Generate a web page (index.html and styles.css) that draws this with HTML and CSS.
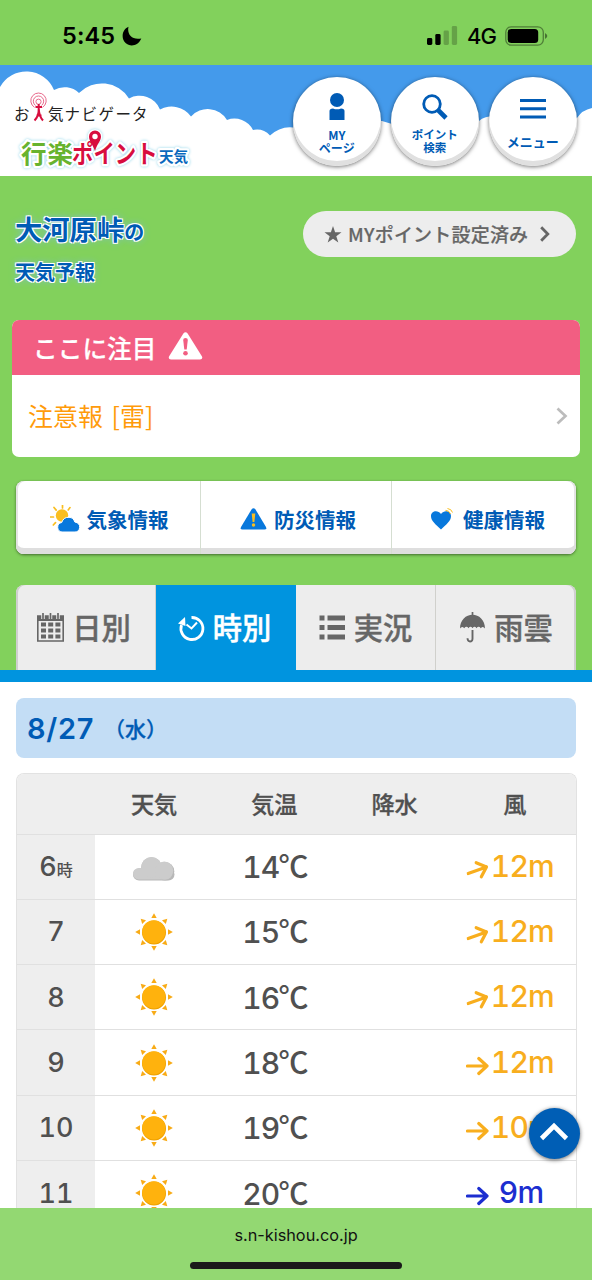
FILE: index.html
```html
<!DOCTYPE html>
<html lang="ja">
<head>
<meta charset="utf-8">
<title>大河原峠の天気予報</title>
<link rel="stylesheet" href="styles.css">
</head>
<body>
<svg width="0" height="0" class="defs">
  <symbol id="sun" viewBox="0 0 40 40"><circle cx="20" cy="20.4" r="12" fill="#eda000"/><circle cx="19.8" cy="19.8" r="11.6" fill="#ffb20d"/><g fill="#f8ab16"><path id="ray" d="M20 1.2l2.7 4.8h-5.4z"/><use href="#ray" transform="rotate(45 20 20)"/><use href="#ray" transform="rotate(90 20 20)"/><use href="#ray" transform="rotate(135 20 20)"/><use href="#ray" transform="rotate(180 20 20)"/><use href="#ray" transform="rotate(225 20 20)"/><use href="#ray" transform="rotate(270 20 20)"/><use href="#ray" transform="rotate(315 20 20)"/></g></symbol>
  <symbol id="arrow" viewBox="0 0 24 24"><path d="M1.500 12H21M12.800 4.500L21 12l-8.200 7.500" fill="none" stroke="currentColor" stroke-width="3.200" stroke-linecap="round" stroke-linejoin="round"/></symbol>
</svg>
<div class="screen">
  <div class="statusbar">
    <div class="clock">5:45
      <svg width="20" height="20" viewBox="0 0 20 20"><path d="M6.500 .8C4.800 7.800 9.500 14.500 19.300 12.500C16.500 19.500 8.500 21.500 3.600 17C-1.500 12 .3 3.500 6.500.8z"/></svg>
    </div>
    <div class="signals">
      <svg width="31" height="20" viewBox="0 0 31 20"><rect x="0" y="12" width="5.300" height="7" rx="1.400"/><rect x="8.300" y="8" width="5.300" height="11" rx="1.400"/><g opacity=".22"><rect x="16.600" y="4.500" width="5.300" height="14.500" rx="1.400"/><rect x="24.800" y="0" width="5.300" height="19" rx="1.400"/></g></svg>
      <span>4G</span>
      <svg width="43" height="20" viewBox="0 0 43 20"><rect x=".8" y=".8" width="37.500" height="18.400" rx="5.500" fill="none" stroke="#000" stroke-opacity=".4" stroke-width="1.300"/><rect x="2.700" y="2.900" width="30.500" height="14.200" rx="3.500"/><path d="M40 7q4.600 3 0 6z" opacity=".45"/></svg>
    </div>
  </div>

  <header class="header">
    <svg class="sky" width="592" height="111" viewBox="0 65 592 111">
      <path fill="#fff" d="M0 87A30 30 0 0 1 54 90A21 21 0 0 1 79 93A32 32 0 0 1 129 98.500A22 22 0 0 1 160 109.500A24 24 0 0 1 191 116.500A22.500 22.500 0 0 1 227 120A21 21 0 0 1 253 130A18 18 0 0 1 270 135.500A28 28 0 0 1 310 136Q345 120 382 121L392 124Q430 105 479 121Q484 116 496 116L540 120L577 118Q582 110 592 108V176H0Z"/>
    </svg>
    <div class="header-row">
      <svg class="logo" width="200" height="111" viewBox="0 65 200 111">
        <g fill="none" stroke="#e8698c" stroke-width="1"><path d="M34.500 107.300A7.700 7.700 0 1 1 42.500 107.300"/><path d="M35.600 105.500A5.200 5.200 0 1 1 41.400 105.500"/><circle cx="38.500" cy="101.700" r="2.600"/></g>
        <path d="M38.700 104V110M35.500 107h6.500M38.700 108.500Q39 116 34.500 120.500M38.800 109Q39 116 43 120.500M36.500 115.500h5" fill="none" stroke="#d80d3e" stroke-width="2"/>
        <g class="logo-small"><text x="14" y="120.300">お</text><text x="48" y="120.300">気</text><text x="64.500" y="120.300">ナ</text><text x="81.500" y="120.300">ビ</text><text x="98.500" y="120.300">ゲ</text><text x="115.500" y="120.300">ー</text><text x="132" y="120.300">タ</text></g>
        <g class="logo-big">
          <g class="halo"><text transform="translate(21 162.500) scale(1 1)" textLength="52">行楽</text><text transform="translate(72 162.500) scale(.84 1)">ポイント</text><text class="tiny" x="159" y="162" textLength="29">天気</text><circle cx="95" cy="136.500" r="5"/></g>
          <text transform="translate(21 162.500)" textLength="52" fill="#67b32e">行楽</text><text class="kana" transform="translate(72 162.500) scale(.84 1)" fill="#d80d3e">ポイント</text><text class="tiny" x="159" y="162" textLength="29" fill="#0868bd">天気</text>
        </g>
        <path d="M95 151C92 143 89 141 89 136.500a6 6 0 0 1 12 0C101 141 97.500 143 95 151z" fill="#d80d3e"/><circle cx="95" cy="136.500" r="2.700" fill="#fff"/>
      </svg>
      <nav class="rounds">
        <a class="round"><svg width="18" height="28" viewBox="0 0 18 28"><circle cx="9" cy="7" r="7"/><path d="M1.500 27V18Q1.500 15.500 5 15.500Q9 17.200 13 15.500Q16.500 15.500 16.500 18V27z"/></svg><span class="round-label">MY<br>ページ</span></a>
        <a class="round"><svg width="26" height="26" viewBox="0 0 26 26"><circle cx="10" cy="10" r="8.300" fill="none" stroke="#005bb5" stroke-width="2.800"/><path d="M16 16l8 8" stroke="#005bb5" stroke-width="4.600"/></svg><span class="round-label search">ポイント<br>検索</span></a>
        <a class="round menu"><svg width="26" height="20" viewBox="0 0 26 20"><path d="M0 1.500h26M0 9.800h26M0 18h26" stroke="#005bb5" stroke-width="2.900"/></svg><span class="round-label">メニュー</span></a>
      </nav>
    </div>
  </header>

  <section class="hero">
    <div class="titlebar">
      <h1><span>大河原峠</span><small>の</small><em>天気予報</em></h1>
      <a class="pill"><svg width="18" height="17" viewBox="0 0 17 17"><path d="M8.500 0l2.100 6.200H17l-5.200 4 2 6.400-5.300-3.900-5.300 3.900 2-6.400L0 6.200h6.400z"/></svg><span>MYポイント設定済み</span><svg width="10" height="16" viewBox="0 0 10 16"><path d="M1.200 1.200L7.800 8l-6.600 6.700" fill="none" stroke="#666" stroke-width="2.800"/></svg></a>
    </div>

    <div class="alert">
      <h2>ここに注目<svg width="35" height="28" viewBox="0 0 35 28"><path d="M15.400 1.500Q17.500-1 19.600 1.500L34 24.500Q35 27.500 32 27.500H3Q0 27.500 1 24.500z" fill="#fff"/><path d="M15.200 8q0-2 2.300-2t2.300 2l-1.100 9.500h-2.400z" fill="#f25e82"/><circle cx="17.500" cy="21.300" r="2.300" fill="#f25e82"/></svg></h2>
      <a class="alert-body"><span>注意報 [雷]</span><svg width="12" height="18" viewBox="0 0 12 18"><path d="M1.500 1.500L9.500 9l-8 7.500" fill="none" stroke="#bcbcbc" stroke-width="2.700"/></svg></a>
    </div>

    <div class="infos">
      <a><svg width="30" height="28" viewBox="0 0 30 28"><circle cx="12" cy="10.500" r="6.200" fill="#f9be20"/><path d="M12.500 0v3M4 2.500l2.200 2.600M20 2.600l-1.800 2.300M0 12h3.500M3.300 20l2.200-2.300" stroke="#f9be20" stroke-width="1.700" stroke-linecap="round"/><path d="M12 27a4.800 4.800 0 0 1-.3-9.500Q13.500 12 19 12.300Q23.500 12.500 24.800 17Q30 18 29.700 22.500Q29 27 25 27z" fill="#0878dc" stroke="#fff"/></svg><span>気象情報</span></a>
      <a><svg width="27" height="22" viewBox="0 0 27 22"><path d="M11.500 1.500q2-2.400 4 0L26 19q1 2.500-1.500 2.500H2.500Q0 21.500 1 19z" fill="#0878dc"/><path d="M11.700 5.500h3.600l-.9 8.500h-1.800z" fill="#f9be20"/><circle cx="13.500" cy="17" r="1.700" fill="#f9be20"/></svg><span>防災情報</span></a>
      <a><svg width="23" height="22" viewBox="0 0 23 22"><path d="M10 21.500C5 16.500 0 13 0 8.200C0 2.500 7 1.500 10 6C13 1.500 20 2.500 20 8.200C20 13 15 16.500 10 21.500z" fill="#0878dc"/><path d="M14.500 2.400q3.500-.2 5 3.600M16.500.5q4 .5 5 4" stroke="#f9be20" fill="none"/></svg><span>健康情報</span></a>
    </div>

    <div class="tabs">
      <a><svg width="27" height="29" viewBox="0 0 27 29"><path d="M.8 3h25.400v25H.8z" fill="none" stroke="#666" stroke-width="1.600"/><path d="M1 3h25v5H1z"/><path d="M6 0v6M13.500 0v6M21 0v6" stroke="#ededed" stroke-width="3.500"/><path d="M6 .5v5M13.500.5v5M21 .5v5" stroke="#666" stroke-width="1.700" stroke-linecap="round"/><path d="M4 9.500h5v4H4zm7.200 0h5v4h-5zm7.200 0h5v4h-5zM4 15.500h5v4H4zm7.200 0h5v4h-5zm7.200 0h5v4h-5zM4 21.500h5v4H4zm7.200 0h5v4h-5zm7.200 0h5v4h-5z"/></svg><span>日別</span></a>
      <a class="on"><svg width="27" height="28" viewBox="0 0 27 28"><path d="M13.500 3.500A11 11 0 1 1 3.500 11" fill="none" stroke="#fff" stroke-width="2.800"/><path d="M0 9.500L7 3l.5 9z"/><path d="M8.500 10.500l5 4 5.500-6" fill="none" stroke="#fff" stroke-width="2"/></svg><span>時別</span></a>
      <a><svg width="27" height="27" viewBox="0 0 27 27"><path d="M.5 1.500h5v5h-5zm8 0H26v5H8.500zM.5 11h5v5h-5zm8 0H26v5H8.500zM.5 20.500h5v5h-5zm8 0H26v5H8.500z"/></svg><span>実況</span></a>
      <a><svg width="27" height="31" viewBox="0 0 27 31"><path d="M13.500 0v3" stroke="#666" stroke-width="1.700"/><path d="M1 16.500C1 8 7 2.800 13.500 2.800S26 8 26 16.500Q24 13.500 21.800 16.200Q19.500 13.500 17.500 16.200Q15.500 13.500 13.500 16.200Q11.500 13.500 9.500 16.200Q7.500 13.500 5.200 16.200Q3 13.500 1 16.500z"/><path d="M13.500 18v9q-.2 2.500-2.500 2.500T8.500 26.300" fill="none" stroke="#666" stroke-width="1.900"/></svg><span>雨雲</span></a>
    </div>
  </section>

  <main class="content">
    <div class="date"><b>8/27</b><span>（水）</span></div>
    <table class="forecast">
      <thead><tr><th></th><th>天気</th><th>気温</th><th>降水</th><th>風</th></tr></thead>
      <tbody>
        <tr><th>6<small>時</small></th><td><svg class="cloud" width="42" height="24" viewBox="0 0 42 24"><g fill="#b8b8b8"><rect x="0" y="11.500" width="41.500" height="12" rx="6"/><circle cx="18.500" cy="10.500" r="10.300"/><circle cx="32" cy="14.300" r="9.300"/></g><g fill="#ccc"><rect x="0" y="11" width="39" height="11.500" rx="5.700"/><circle cx="18.500" cy="10.300" r="10.300"/><circle cx="31.300" cy="13.500" r="9"/></g></svg></td><td class="temp">14<i>℃</i></td><td></td><td class="wind up"><svg><use href="#arrow"/></svg>12m</td></tr>
        <tr><th>7</th><td><svg class="sun"><use href="#sun"/></svg></td><td class="temp">15<i>℃</i></td><td></td><td class="wind up"><svg><use href="#arrow"/></svg>12m</td></tr>
        <tr><th>8</th><td><svg class="sun"><use href="#sun"/></svg></td><td class="temp">16<i>℃</i></td><td></td><td class="wind up"><svg><use href="#arrow"/></svg>12m</td></tr>
        <tr><th>9</th><td><svg class="sun"><use href="#sun"/></svg></td><td class="temp">18<i>℃</i></td><td></td><td class="wind"><svg><use href="#arrow"/></svg>12m</td></tr>
        <tr><th>10</th><td><svg class="sun"><use href="#sun"/></svg></td><td class="temp">19<i>℃</i></td><td></td><td class="wind"><svg><use href="#arrow"/></svg>10m</td></tr>
        <tr><th>11</th><td><svg class="sun"><use href="#sun"/></svg></td><td class="temp">20<i>℃</i></td><td></td><td class="wind weak"><svg><use href="#arrow"/></svg>9m</td></tr>
      </tbody>
    </table>
  </main>

  <footer class="browserbar"><span>s.n-kishou.co.jp</span><div class="home"></div></footer>
  <a class="totop"><svg width="30" height="20" viewBox="0 0 30 20"><path d="M2.500 16.500L15 4l12.500 12.500" fill="none" stroke="#fff" stroke-width="4.600"/></svg></a>
</div>
</body>
</html>
```
FILE: styles.css
```css
* { box-sizing: border-box; margin: 0; padding: 0; }
body { width: 592px; height: 1280px; overflow: hidden; background: #fff; font-family: "Noto Sans CJK JP", sans-serif; font-kerning: none; }
svg { display: block; flex: none; }
.defs { position: absolute; }
.screen { position: relative; width: 592px; height: 1280px; display: flex; flex-direction: column; overflow: hidden; }

.statusbar { flex: none; height: 65px; background: #82d15c; display: flex; justify-content: space-between; padding: 6px 44px 0 62px; font-family: Inter, sans-serif; color: #000; }
.clock { display: flex; align-items: center; gap: 7px; font-size: 23.5px; font-weight: 600; letter-spacing: .1px; }
.signals { display: flex; align-items: center; gap: 9px; font-size: 22px; font-weight: 500; }
.signals span { letter-spacing: -1px; }

.header { flex: none; display: grid; height: 111px; background: #449aeb; }
.sky, .header-row { grid-area: 1 / 1; }
.header-row { display: flex; justify-content: space-between; padding-right: 15px; }
.logo-small { font: 400 15.5px "Noto Sans CJK JP", sans-serif; fill: #222; }
.logo-big text { font: 700 25.500px "Noto Sans CJK JP", sans-serif; }
.logo-big .tiny { font-size: 14.500px; }
.halo { fill: #cfeef7; stroke: #fff; stroke-width: 4.500px; stroke-linejoin: round; filter: drop-shadow(0 0 1.500px #8fd6ea); }
.rounds { display: flex; gap: 9.500px; padding-top: 12px; }
.round { width: 88.500px; height: 88.500px; border-radius: 50%; background: #fff; box-shadow: inset 0 -5px 0 #e0e0e0, 0 1px 4px rgba(0,0,0,.55); display: flex; flex-direction: column; align-items: center; padding-top: 16px; color: #005bb5; }
.round svg { fill: #005bb5; height: 28px; }
.round-label { font-size: 12px; line-height: 13px; font-weight: 700; text-align: center; margin-top: 7px; }
.round-label.search { font-size: 11.500px; }
.round.menu svg { margin-top: 2px; }
.round.menu .round-label { font-size: 13px; margin-top: 12px; }

.hero { flex: none; height: 506px; background: #82d15c; border-bottom: 12px solid #0094df; padding: 0 16px; display: flex; flex-direction: column; }
.titlebar { height: 144px; padding-top: 35px; display: flex; justify-content: space-between; align-items: flex-start; }
h1 { font-weight: 700; color: #005bb5; line-height: 38px; font-size: 27.300px; margin: -2px 0 0 -1px; text-shadow: 1px 1px 0 #fff, -1px -1px 0 #fff, 1px -1px 0 #fff, -1px 1px 0 #fff, 0 0 7px #7ab8f0; }
h1 small { font-size: 20px; }
h1 em { display: block; font-style: normal; font-size: 20px; line-height: 40px; margin-top: 1px; }
.pill { width: 273px; height: 46px; border-radius: 23px; background: #ededed; color: #666; display: flex; align-items: center; padding-left: 21px; font-size: 19px; font-weight: 500; fill: #666; -webkit-text-stroke: .2px; }
.pill span { margin: -2px 12px 0 6px; letter-spacing: .2px; white-space: nowrap; }
.alert { margin: 0 -4px; height: 137px; background: #fff; border-radius: 7px; overflow: hidden; }
.alert h2 { height: 55px; background: #f25e82; color: #fff; display: flex; align-items: center; gap: 12px; padding: 0 0 2px 21px; font-size: 24.700px; font-weight: 500; -webkit-text-stroke: .2px; }
.alert h2 svg { margin-top: -2px; }
.alert-body { height: 82px; display: flex; justify-content: space-between; align-items: center; padding: 0 12px 0 16px; font-size: 25px; color: #ff9b0a; font-weight: 400; }
.alert-body span { word-spacing: 3px; margin-top: -2px; }
.infos { margin-top: 24px; height: 73px; border-radius: 8px; background: #fff; box-shadow: inset 0 -6px 0 #dedede, inset 2px 0 0 #e4e4e4, inset -2px 0 0 #e4e4e4, 0 1px 3px rgba(0,0,0,.5); display: grid; grid-template-columns: 185px 191px 184px; color: #005bb5; font-size: 20.500px; font-weight: 700; }
.infos a { display: flex; align-items: center; justify-content: center; gap: 7px; padding: 2px 0 0 2px; border-right: 1px solid #d5ded1; }
.infos a span { margin-top: 1px; }
.infos a:nth-child(2) { padding-left: 4px; }
.infos a:last-child { border: 0; gap: 9px; padding-left: 8px; }
.tabs { height: 85px; display: grid; grid-template-columns: repeat(4, 1fr); background: #ededed; border-radius: 8px 8px 0 0; box-shadow: inset 2px 0 0 #cfcfcf, inset -2px 0 0 #cfcfcf; overflow: hidden; margin-top: auto; }
.tabs a { display: flex; align-items: center; justify-content: center; gap: 8px; font-size: 29.300px; font-weight: 500; color: #666; fill: #666; padding-right: 3px; border-right: 1px solid #d0d0cc; -webkit-text-stroke: .4px; }
.tabs a span { margin-top: -3px; }
.tabs a:nth-child(n+3) { padding-right: 0; }
.tabs a:last-child { border: 0; }
.tabs .on { background: #0094df; color: #fff; fill: #fff; border: 0; }

.content { flex: 1; min-height: 0; overflow: hidden; padding: 16px 16px 0; }
.date { height: 60px; border-radius: 8px; background: #c3ddf5; color: #005bb5; display: flex; align-items: center; padding-left: 11px; }
.date b { font: 600 29px Inter, sans-serif; letter-spacing: .7px; width: 77px; }
.date span { font-size: 21px; font-weight: 500; -webkit-text-stroke: .3px; }
.forecast { table-layout: fixed; width: 561px; margin-top: 15px; border-collapse: separate; border-spacing: 0; border: 1px solid #e2e2e2; border-bottom: 0; border-radius: 8px 8px 0 0; overflow: hidden; color: #505050; }
.forecast th { background: #eee; font-weight: 500; }
.forecast th:first-child { width: 78px; }
.forecast thead th { height: 60.500px; font-size: 23.200px; border-bottom: 1px solid #e0e0e0; padding: 0 2px 2px 0; -webkit-text-stroke: .3px; }
.forecast tbody th { font: 500 27px Inter, sans-serif; font-feature-settings: "tnum"; letter-spacing: 0; }
.forecast th small { font: 500 16px "Noto Sans CJK JP", sans-serif; letter-spacing: 0; }
.forecast tbody tr > * { height: 65.300px; border-bottom: 1px solid #e0e0e0; vertical-align: middle; }
.cloud { margin: 4px auto 0 38px; }
.sun { width: 40px; height: 40px; margin: 0 auto 0 39px; }
.forecast td.temp { font: 500 30px Inter, sans-serif; font-feature-settings: "tnum"; text-align: center; white-space: nowrap; line-height: 36px; letter-spacing: -.8px; padding-bottom: 2px; }
.temp i { display: inline-block; font: 500 30px/36px "Noto Sans CJK JP", sans-serif; letter-spacing: 0; vertical-align: 1px; height: 36px; margin-left: -1px; }
.forecast td.wind { font: 500 30px/36px Inter, sans-serif; color: #f8ae1e; white-space: nowrap; padding: 0 0 2px 10px; font-feature-settings: "tnum"; letter-spacing: -.8px; }
.wind svg { display: inline-block; width: 24px; height: 24px; vertical-align: -5px; margin-right: 1px; }
.wind.up svg { transform: rotate(-20deg); }
.forecast td.wind.weak { color: #1c2ed0; }
.wind.weak svg { margin-right: 9px; }

.browserbar { flex: none; height: 72px; background: #93d872; display: flex; flex-direction: column; align-items: center; justify-content: space-between; padding: 17px 0 11px; font: 400 16.300px/20px Inter, sans-serif; color: #111; }
.home { width: 212px; height: 7px; border-radius: 4px; background: #1a1a1a; }
.totop { position: absolute; left: 528.500px; top: 1108px; width: 51px; height: 51px; border-radius: 50%; background: #005eb5; box-shadow: 0 1px 4px rgba(0,0,0,.6); display: flex; align-items: center; justify-content: center; padding-bottom: 4px; }
```
